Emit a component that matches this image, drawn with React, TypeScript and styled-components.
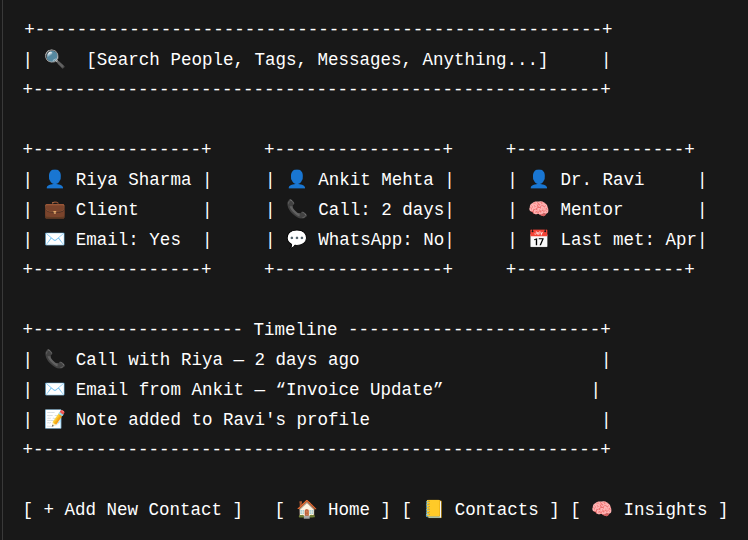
import React from 'react';
import styled, { createGlobalStyle } from 'styled-components';

const GlobalStyle = createGlobalStyle`
  * { box-sizing: border-box; }
  body { margin: 0; background: #181818; }
`;

const Page = styled.div`
  width: 748px;
  height: 540px;
  padding-left: 2px;
  background: #181818;
  overflow: hidden;
`;

const Frame = styled.main`
  height: 540px;
  padding: 15px 0 0 19.55px;
  border-left: 1px solid #393939;
`;

const Line = styled.div<{ $shift?: number }>`
  height: 30px;
  line-height: 30px;
  padding-left: ${({ $shift = 0 }) => $shift}px;
  white-space: pre;
  color: #fff;
  font-family: "Liberation Mono", "Noto Color Emoji", monospace;
  font-size: 17.5px;
`;

const Emoji = styled.span`
  margin-left: 0.5px;
  margin-right: -0.5px;
`;

const rule = (n: number) => '+' + '-'.repeat(n) + '+';
const cards = [rule(16), rule(16), rule(16)].join('     ');

const lines = [
  rule(54),
  '| 🔍  [Search People, Tags, Messages, Anything...]     |',
  rule(54),
  '',
  cards,
  '| 👤 Riya Sharma |     | 👤 Ankit Mehta |     | 👤 Dr. Ravi     |',
  '| 💼 Client      |     | 📞 Call: 2 days|     | 🧠 Mentor       |',
  '| ✉️ Email: Yes  |     | 💬 WhatsApp: No|     | 📅 Last met: Apr|',
  cards,
  '',
  '+' + '-'.repeat(20) + ' Timeline ' + '-'.repeat(24) + '+',
  '| 📞 Call with Riya — 2 days ago                       |',
  '| ✉️ Email from Ankit — “Invoice Update”              |',
  "| 📝 Note added to Ravi's profile                      |",
  rule(54),
  '',
  '[ + Add New Contact ]   [ 🏠 Home ] [ 📒 Contacts ] [ 🧠 Insights ]',
];

const withEmoji = (text: string) =>
  text
    .split(/(\p{Extended_Pictographic}\uFE0F?)/u)
    .map((part, i) => (i % 2 ? <Emoji key={i}>{part}</Emoji> : part));

export default function App() {
  return (
    <>
      <GlobalStyle />
      <Page>
        <Frame>
          {lines.map((text, i) => (
            <Line key={i} $shift={i === 0 ? 1.75 : 0}>{withEmoji(text)}</Line>
          ))}
        </Frame>
      </Page>
    </>
  );
}
